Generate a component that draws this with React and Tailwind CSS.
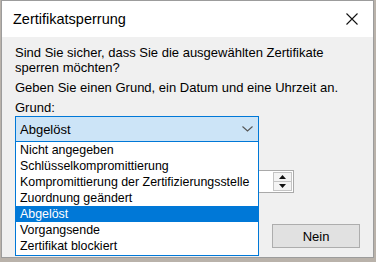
import React from 'react';

const reasons = [
  'Nicht angegeben',
  'Schlüsselkompromittierung',
  'Kompromittierung der Zertifizierungsstelle',
  'Zuordnung geändert',
  'Abgelöst',
  'Vorgangsende',
  'Zertifikat blockiert',
];

const CloseIcon = () => (
  <svg width="12" height="12" viewBox="0 0 12 12" className="block">
    <path d="M0.5 0.5 L11.5 11.5 M11.5 0.5 L0.5 11.5" stroke="#111" strokeWidth="1.1" fill="none" />
  </svg>
);

const Chevron = () => (
  <svg width="11" height="6" viewBox="0 0 11 6" className="block">
    <path d="M0.5 0.5 L5.5 5 L10.5 0.5" stroke="#555" strokeWidth="1.1" fill="none" />
  </svg>
);

const Spinner = () => (
  <div className="flex flex-col w-[19px] h-[19px] my-[1px] mr-[1px] border border-[#c4c4c4] bg-[#f4f4f4]">
    <div className="flex-1 flex items-center justify-center border-b border-[#c4c4c4]">
      <svg width="7" height="4" viewBox="0 0 7 4"><path d="M0 4 L3.5 0 L7 4 Z" fill="#111" /></svg>
    </div>
    <div className="flex-1 flex items-center justify-center">
      <svg width="7" height="4" viewBox="0 0 7 4"><path d="M0 0 L3.5 4 L7 0 Z" fill="#111" /></svg>
    </div>
  </div>
);

export default function App() {
  return (
    <div className="w-[376px] h-[262px] bg-[#b9b2aa] overflow-hidden font-['Liberation_Sans',Arial,sans-serif] text-[13px] text-black">
      <div className="ml-[1px] w-[373px] h-[258px] border border-[#9c9c9c] flex flex-col">
        {/* title bar */}
        <div className="h-[36px] bg-white flex items-center justify-between pl-[11px] pr-[10px] shrink-0">
          <span className="text-[14.5px] leading-none pt-[1px]">Zertifikatsperrung</span>
          <div className="w-[22px] flex justify-center">
            <CloseIcon />
          </div>
        </div>

        {/* body */}
        <div className="relative flex-1 bg-[#f0f0f0] px-[13px] pt-[8px]">
          <p className="leading-[15px] w-[320px]">
            Sind Sie sicher, dass Sie die ausgewählten Zertifikate sperren möchten?
          </p>
          <p className="leading-[15px] mt-[5px]">Geben Sie einen Grund, ein Datum und eine Uhrzeit an.</p>
          <p className="leading-[15px] mt-[5px]">Grund:</p>

          <div className="mt-[1px] w-[244px] h-[26px] border border-[#0078d7] bg-[#cce4f7] flex items-center justify-between pl-[4px] pr-[5px]">
            <span className="leading-[15px]">Abgelöst</span>
            <Chevron />
          </div>

          {/* date and time row (mostly hidden by the open list) */}
          <div className="mt-[28px] flex gap-[6px]">
            <div className="w-[180px] h-[23px] border border-[#a9a9a9] bg-white" />
            <div className="w-[93px] h-[23px] border border-[#a9a9a9] bg-white flex items-start justify-end">
              <Spinner />
            </div>
          </div>

          {/* buttons */}
          <div className="mt-[31px] flex justify-end gap-[16px]">
            <button className="w-[88px] h-[24px] border border-[#adadad] bg-[#e1e1e1] leading-none">Ja</button>
            <button className="w-[88px] h-[24px] border border-[#adadad] bg-[#e1e1e1] leading-none">Nein</button>
          </div>

          {/* open dropdown list */}
          <div className="absolute left-[13px] top-[104px] w-[244px] bg-white border border-[#0078d7] flex flex-col pb-[1px] text-[12.4px]">
            {reasons.map((r) => (
              <div
                key={r}
                className={`h-[16px] leading-[16px] pl-[4px] whitespace-nowrap ${
                  r === 'Abgelöst' ? 'bg-[#0078d7] text-white' : ''
                }`}
              >
                {r}
              </div>
            ))}
          </div>
        </div>
      </div>
    </div>
  );
}
